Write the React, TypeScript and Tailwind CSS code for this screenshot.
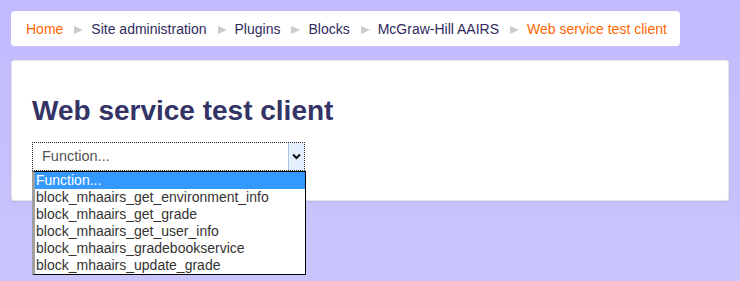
import React from "react";

const Sep = () => (
  <svg width="9" height="8" viewBox="0 0 9 8" className="ml-[11px] mr-[8px] shrink-0">
    <polygon points="0,0 9,4 0,8" fill="#cccccc" />
  </svg>
);

export default function App() {
  const items = [
    "block_mhaairs_get_environment_info",
    "block_mhaairs_get_grade",
    "block_mhaairs_get_user_info",
    "block_mhaairs_gradebookservice",
    "block_mhaairs_update_grade",
  ];
  return (
    <div
      className="relative h-[281px] w-[740px] overflow-hidden bg-gradient-to-b from-[#c1bbff] to-[#c9c5fb] pl-[11px] pt-[11px]"
      style={{ fontFamily: '"Liberation Sans", Arial, sans-serif' }}
    >
      <nav className="flex h-[35px] w-[669px] items-center whitespace-nowrap rounded-[4px] bg-white pl-[15px] pt-[2px] text-[14px] text-[#2f2b5c]">
        <span className="text-[#ff6600]">Home</span>
        <Sep />
        <span>Site administration</span>
        <Sep />
        <span>Plugins</span>
        <Sep />
        <span>Blocks</span>
        <Sep />
        <span>McGraw-Hill AAIRS</span>
        <Sep />
        <span className="text-[#ff6600]">Web service test client</span>
      </nav>
      <div className="mt-[14px] h-[141px] w-[718px] rounded-[3px] border border-[#e6e6e6] bg-white pl-[20px] pt-[35px] shadow-[0_1px_2px_rgba(0,0,0,0.08)]">
        <h2 className="text-[28px] font-bold leading-[30px] text-[#333366]">
          Web service test client
        </h2>
        <div className="mt-[16px] flex h-[29px] w-[273px] border border-dotted border-[#222] bg-white">
          <div className="flex flex-1 items-center pl-[9px] text-[14.5px] text-[#555]">Function...</div>
          <div className="flex w-[16px] items-center justify-center border-l border-[#a9c6ea] bg-[#e3effc]">
            <svg width="9" height="7" viewBox="0 0 9 7">
              <polyline points="1,1.5 4.5,5 8,1.5" fill="none" stroke="#111" strokeWidth="2" />
            </svg>
          </div>
        </div>
      </div>
      <div className="absolute left-[32px] top-[171px] w-[274px] border border-black border-l-[#a0a0a0] border-l-[3px] bg-white text-[14px] leading-[17px] text-[#333]">
        <div className="bg-[#3399ff] pl-[1px] text-white">Function...</div>
        {items.map((t) => (
          <div key={t} className="pl-[1px]">{t}</div>
        ))}
      </div>
    </div>
  );
}
